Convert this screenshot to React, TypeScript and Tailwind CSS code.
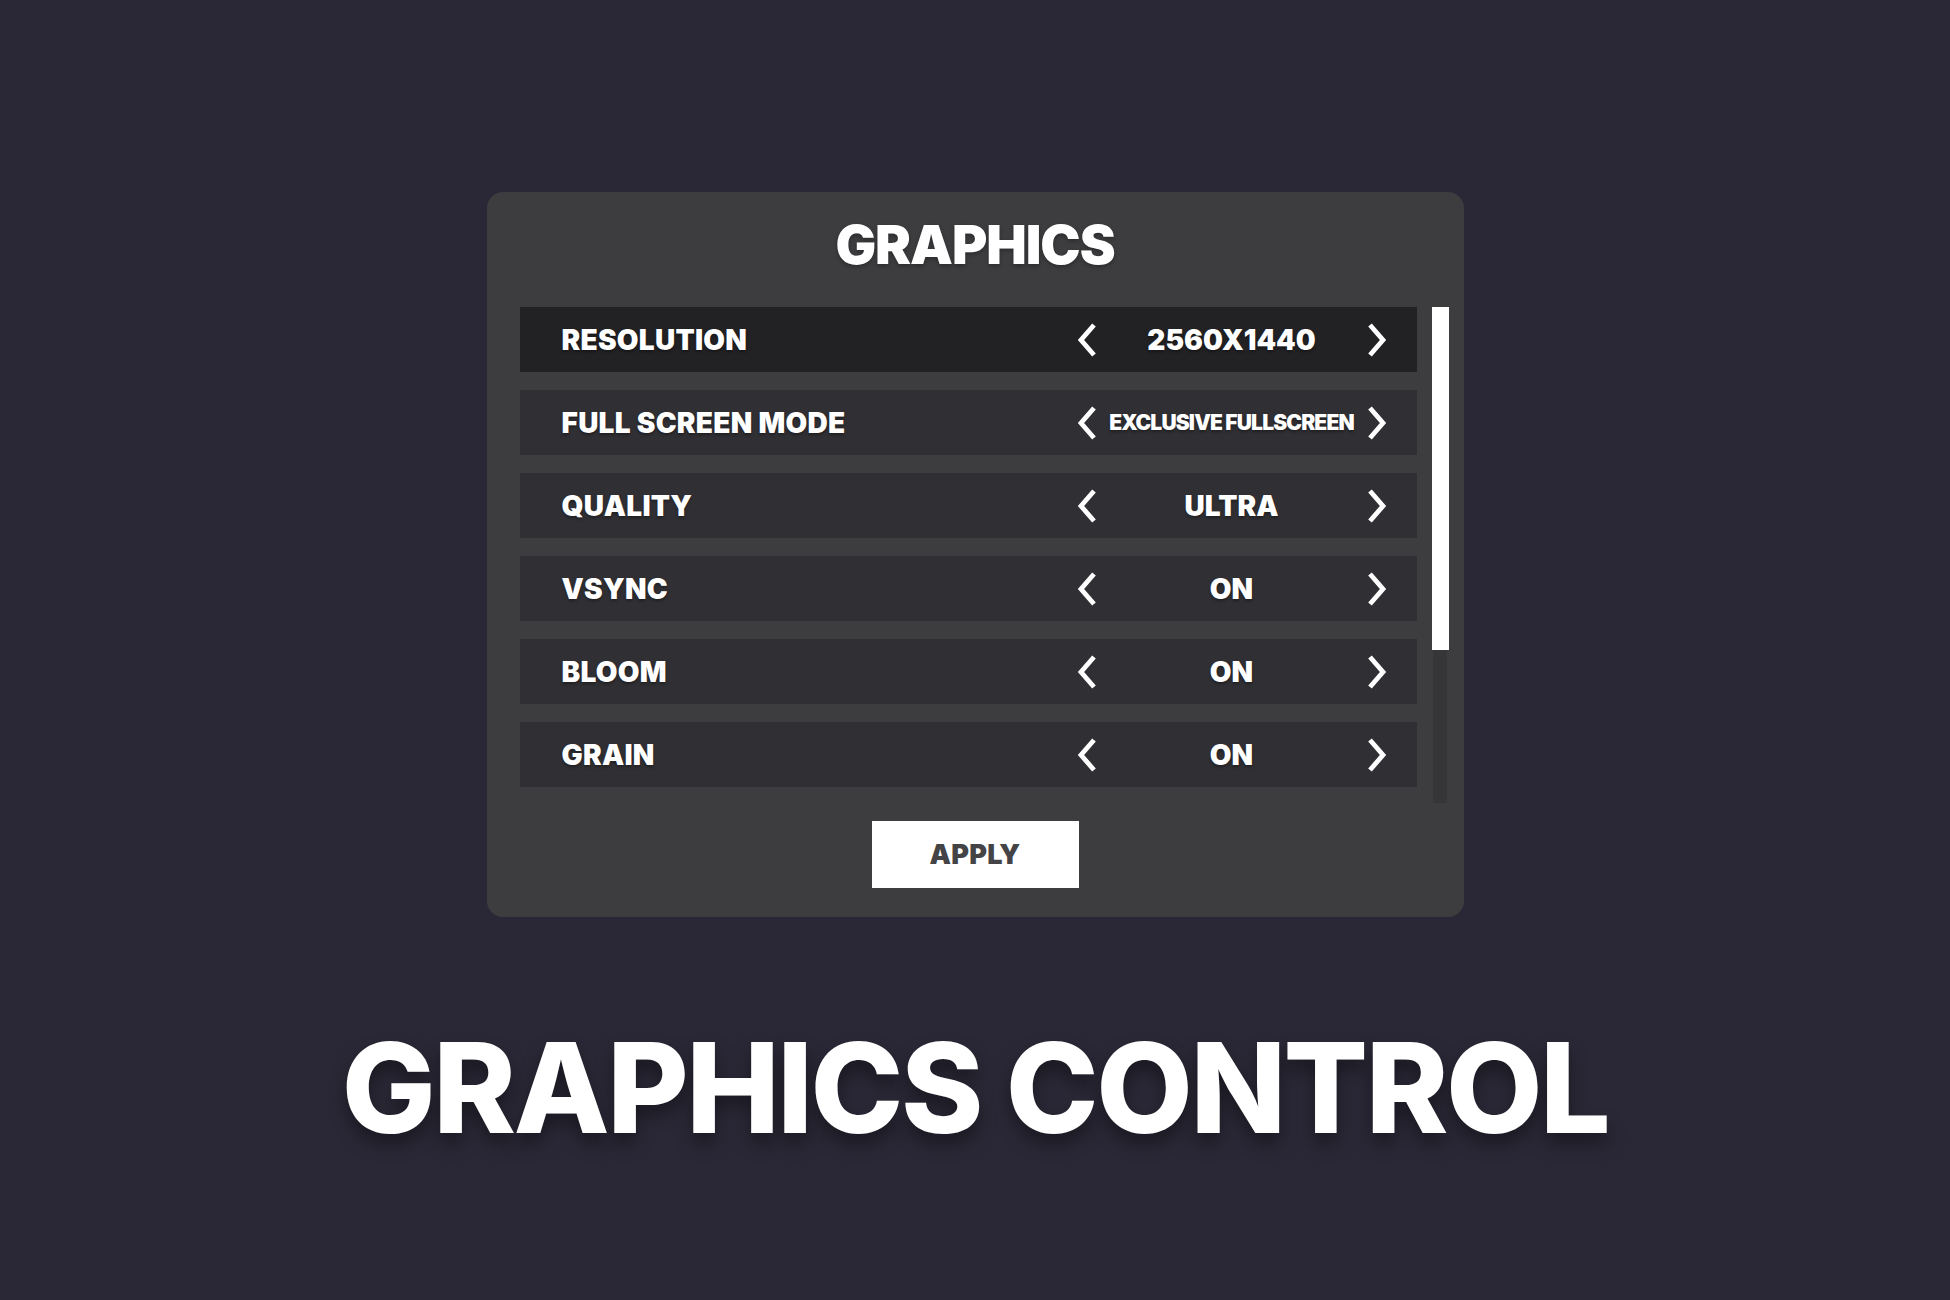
import React from "react";

type Setting = { label: string; value: string; small?: boolean };

const settings: Setting[] = [
  { label: "RESOLUTION", value: "2560X1440" },
  { label: "FULL SCREEN MODE", value: "EXCLUSIVE FULLSCREEN", small: true },
  { label: "QUALITY", value: "ULTRA" },
  { label: "VSYNC", value: "ON" },
  { label: "BLOOM", value: "ON" },
  { label: "GRAIN", value: "ON" },
];

const Chevron = ({ dir }: { dir: "left" | "right" }) => (
  <svg width="20" height="34" viewBox="0 0 20 34" className="shrink-0">
    <polyline
      points={dir === "left" ? "17,2 4,17 17,32" : "3,2 16,17 3,32"}
      fill="none"
      stroke="#ffffff"
      strokeWidth="4.8"
    />
  </svg>
);

const SettingRow = ({ item, active }: { item: Setting; active: boolean }) => (
  <div
    className={`h-[65px] shrink-0 flex items-center justify-between pl-[42px] pr-[30px] ${
      active ? "bg-[#222124]" : "bg-[#302f33]"
    }`}
  >
    <span className="text-[28px] font-black tracking-[0.01em] text-white leading-none [text-shadow:0_2px_3px_rgba(0,0,0,0.35)]">
      {item.label}
    </span>
    <div className="w-[310px] flex items-center justify-between">
      <Chevron dir="left" />
      <span
        className={`flex-1 text-center text-white font-black leading-none [text-shadow:0_2px_3px_rgba(0,0,0,0.35)] ${
          item.small
            ? "text-[21px] tracking-[-0.04em]"
            : "text-[28px] tracking-[0em]"
        }`}
      >
        {item.value}
      </span>
      <Chevron dir="right" />
    </div>
  </div>
);

export default function App() {
  return (
    <div className="min-h-screen w-full bg-[#2a2836] flex flex-col items-center font-['Inter',sans-serif]">
      <section className="mt-[192px] w-[977px] rounded-[16px] bg-[#3d3c3f] pt-[26px] pb-[29px] pl-[33px] pr-[15px] flex flex-col">
        <h1 className="text-center text-[54px] font-black leading-none tracking-[-0.02em] text-white pr-[18px] [text-shadow:0_2px_4px_rgba(0,0,0,0.3)]">
          GRAPHICS
        </h1>

        <div className="mt-[35px] h-[496px] flex gap-[15px]">
          <div className="flex-1 flex flex-col gap-[18px] overflow-hidden">
            {settings.map((s, i) => (
              <SettingRow key={s.label} item={s} active={i === 0} />
            ))}
          </div>
          <div className="w-[17px] h-full flex justify-center bg-[#3d3c3f]">
            <div className="relative w-[14px] h-full bg-[#363538]">
              <div className="absolute top-0 left-[-1px] w-[17px] h-[343px] bg-white" />
            </div>
          </div>
        </div>

        <div className="mt-[18px] flex justify-center pr-[18px]">
          <button className="w-[207px] h-[67px] bg-white text-[#444345] text-[27px] font-black tracking-[0.01em] leading-none">
            APPLY
          </button>
        </div>
      </section>

      <h2 className="mt-[108px] text-[125px] font-extrabold leading-none tracking-[-0.02em] text-white [text-shadow:0_10px_18px_rgba(0,0,0,0.4)]">
        GRAPHICS CONTROL
      </h2>
    </div>
  );
}
